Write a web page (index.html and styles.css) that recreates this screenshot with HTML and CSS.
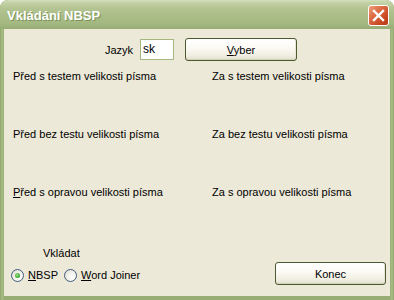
FILE: index.html
```html
<!DOCTYPE html>
<html lang="cs">
<head>
<meta charset="utf-8">
<title>Vkládání NBSP</title>
<link rel="stylesheet" href="styles.css">
</head>
<body>
<div class="window">
  <div class="titlebar">
    <span class="title">Vkládání NBSP</span>
    <span class="close">
      <svg width="21" height="21" viewBox="0 0 21 21"><path d="M6 6 L15 15 M15 6 L6 15" stroke="#fff" stroke-width="2.4" stroke-linecap="square"/></svg>
    </span>
  </div>
  <div class="client">
    <div class="toprow">
      <span class="lang-label">Jazyk</span>
      <div class="textbox">sk</div>
      <button class="btn btn-vyber"><u>V</u>yber</button>
    </div>
    <div class="grid">
      <div class="cell">Před s testem velikosti písma</div>
      <div class="cell">Za s testem velikosti písma</div>
      <div class="cell">Před bez testu velikosti písma</div>
      <div class="cell">Za bez testu velikosti písma</div>
      <div class="cell"><u>P</u>řed s opravou velikosti písma</div>
      <div class="cell">Za s opravou velikosti písma</div>
    </div>
    <div class="bottom">
      <div class="insert">
        <div class="insert-label">Vkládat</div>
        <div class="radios">
          <span class="radio checked"></span><span class="rlabel first"><u>N</u>BSP</span>
          <span class="radio"></span><span class="rlabel"><u>W</u>ord Joiner</span>
        </div>
      </div>
      <button class="btn btn-konec">Konec</button>
    </div>
  </div>
</div>
</body>
</html>
```
FILE: styles.css
```css
html, body {
  margin: 0;
  padding: 0;
  background: #ffffff;
}
body {
  width: 394px;
  height: 300px;
  overflow: hidden;
  font-family: "Liberation Sans", Arial, sans-serif;
  font-size: 11px;
  color: #000;
}
.window {
  box-sizing: border-box;
  width: 394px;
  height: 300px;
  border-radius: 8px 8px 0 0;
  background: linear-gradient(to right, #8ea36b 0, #a9bd86 2px, #98ad74 4px, #98ad74 390px, #a9bd86 392px, #8ea36b 394px);
  display: flex;
  flex-direction: column;
  overflow: hidden;
}
.titlebar {
  height: 29px;
  flex: none;
  box-sizing: border-box;
  padding: 0 5px 0 7px;
  display: flex;
  align-items: center;
  justify-content: space-between;
  border-radius: 8px 8px 0 0;
  background: linear-gradient(to bottom, #d3dfbb 0, #c2d1a5 3px, #b4c593 8px, #aabd88 16px, #a3b780 24px, #98ad74 29px);
}
.title {
  color: #fff;
  font-family: "Liberation Sans", Arial, sans-serif;
  font-weight: bold;
  font-size: 13px;
  text-shadow: 1px 1px 0 #7d9259;
  padding-top: 1px;
}
.close {
  width: 21px;
  height: 21px;
  margin-top: 2px;
  box-sizing: border-box;
  border: 1px solid #fff;
  border-radius: 3px;
  background: linear-gradient(135deg, #eea07e 0, #dd6f48 35%, #c8461f 75%, #b63a16 100%);
  display: flex;
}
.close svg {
  margin: -1px;
}
.client {
  flex: 1;
  margin: 0 4px 4px;
  background: #ece9d8;
  display: flex;
  flex-direction: column;
}
.toprow {
  margin-top: 9px;
  height: 23px;
  display: flex;
  align-items: center;
  padding-left: 86px;
}
.lang-label {
  width: 43px;
  text-align: right;
  margin-right: 7px;
}
.textbox {
  box-sizing: border-box;
  width: 34px;
  height: 21px;
  border: 1px solid #a5b880;
  background: #fff;
  padding-left: 2px;
  line-height: 19px;
  font-size: 12px;
  margin-right: 11px;
}
.btn {
  box-sizing: border-box;
  height: 23px;
  border: 1px solid #4b5a31;
  border-radius: 3px;
  background: linear-gradient(to bottom, #ffffff 0, #fbfaf5 40%, #f2f0e4 75%, #e2dfcd 100%);
  box-shadow: inset 0 -1px 0 #d6d2bc, inset -1px 0 0 #e8e5d6;
  font-family: "Liberation Sans", Arial, sans-serif;
  font-size: 11px;
  color: #000;
  padding: 0;
  text-align: center;
}
.btn-vyber {
  width: 112px;
}
.grid {
  margin-top: 8px;
  padding-left: 9px;
  display: grid;
  grid-template-columns: 199px 1fr;
  grid-auto-rows: 58px;
}
.cell {
  line-height: 14px;
}
.bottom {
  margin-top: auto;
  padding: 0 4px 11px 7px;
  display: flex;
  align-items: flex-end;
  justify-content: space-between;
}
.insert {
  margin-bottom: 3px;
  display: flex;
  flex-direction: column;
  gap: 8px;
}
.insert-label {
  padding-left: 32px;
  line-height: 14px;
}
.radios {
  display: flex;
  align-items: center;
  height: 14px;
}
.radio {
  box-sizing: border-box;
  width: 13px;
  height: 13px;
  border-radius: 50%;
  border: 1px solid #3f5f80;
  background: radial-gradient(circle at 65% 65%, #ffffff 0, #f4f3ee 40%, #d9d6c7 100%);
  display: flex;
  align-items: center;
  justify-content: center;
  margin-right: 4px;
}
.radio.checked::after {
  content: "";
  width: 5px;
  height: 5px;
  border-radius: 50%;
  background: radial-gradient(circle at 40% 40%, #a6e08c 0, #4cb43a 50%, #23911d 100%);
}
.rlabel {
  line-height: 14px;
}
.rlabel.first {
  width: 36px;
}
.btn-konec {
  width: 111px;
}
```
